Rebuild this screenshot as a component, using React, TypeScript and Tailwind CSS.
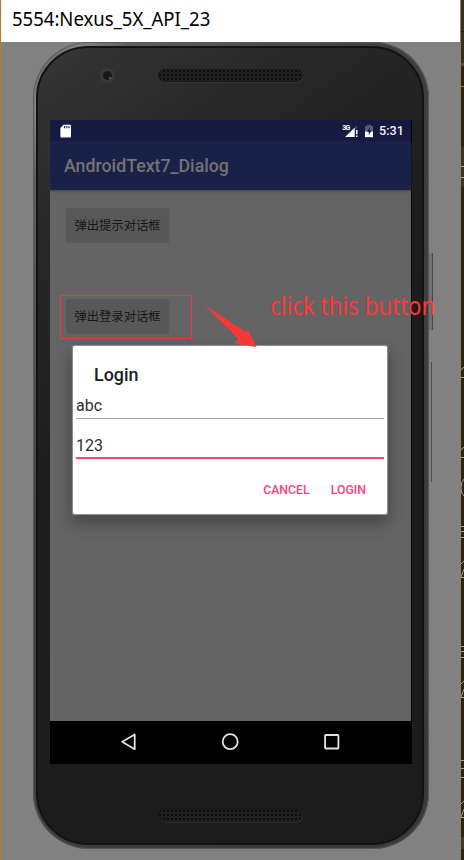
import React from "react";

function Speaker({ id }: { id: string }) {
  return (
    <svg width="146" height="14" viewBox="0 0 146 14" className="block">
      <defs>
        <pattern id={id} width="4" height="4" patternUnits="userSpaceOnUse">
          <rect width="4" height="4" fill="#202020" />
          <rect x="1" y="1" width="2" height="2" fill="#0d0d0d" />
        </pattern>
      </defs>
      <rect x="1" y="1" width="144" height="12.5" rx="6" fill="#3c3c3c" />
      <rect x="0.5" y="0.5" width="144" height="12" rx="6" fill={`url(#${id})`} stroke="#1b1b1b" />
    </svg>
  );
}

function StatusBar() {
  return (
    <div className="flex h-[21px] items-center bg-[#151a41] pl-[10px] text-white">
      <svg width="12" height="14" viewBox="0 0 12 14">
        <path d="M3.5 .8H10.2Q11 .8 11 1.6V12.5Q11 13.4 10.1 13.4H1.3Q.4 13.4 .4 12.5V4Z" fill="#fff" />
        <path d="M4.6 2v2.2M6.8 2v2.2M9 2v2.2" stroke="#151a41" strokeWidth="1.1" />
      </svg>
      <svg width="36" height="16" viewBox="0 0 36 16" className="ml-[269px]">
        <text x="1.3" y="7.2" fontFamily="Roboto" fontSize="7" fontWeight="700" fill="#fff" textLength="8">3G</text>
        <path d="M10 8L16 2V14H10Z" fill="#3e446b" />
        <path d="M4 14L13.7 4.8V14Z" fill="#fff" />
        <path d="M14.2 6H17V14H14.2Z" fill="#151a41" />
        <path d="M15.8 7v4.3M15.8 12.5v1.5" stroke="#fff" strokeWidth="1.5" />
        <path d="M24 3h2V1.8h4V3h2v11h-8Z" fill="#555a78" />
        <path d="M24 8.5h8v5.7h-8Z" fill="#fff" />
        <path d="M28.8 4.3L26 9h1.8v3L30.5 7.8h-1.7Z" fill="#151a41" />
      </svg>
      <span className="ml-[2px] font-[Roboto,sans-serif] text-[12.6px] font-medium leading-5 text-[#f2f2f5]">5:31</span>
    </div>
  );
}

function GreyButton({ label }: { label: string }) {
  return (
    <div className="flex h-[33px] w-[101px] items-center justify-center rounded-[2px] bg-[#585858] font-['Noto_Sans_CJK_SC',sans-serif] text-[12.3px] leading-none text-[#161616] shadow-[0_0_1px_0.5px_#595959]">
      <span className="whitespace-nowrap">{label}</span>
    </div>
  );
}

function NavBar() {
  return (
    <div className="h-[43px] bg-black">
      <svg width="362" height="43" viewBox="0 0 362 43" fill="none" stroke="#e2e2e2" strokeWidth="1.8" strokeLinejoin="round">
        <path d="M72.2 20.8L84.7 13.5V28.2Z" />
        <circle cx="180.2" cy="20.7" r="7.5" />
        <rect x="275.1" y="14" width="13.3" height="13.5" rx=".7" />
      </svg>
    </div>
  );
}

function LoginDialog() {
  return (
    <div className="absolute left-[23px] top-[226px] flex h-[168px] w-[314px] flex-col rounded-[2px] bg-white font-[Roboto,sans-serif] text-[#212121] shadow-[0_0_1px_0.5px_#949494,0_8px_16px_2px_rgba(0,0,0,0.3)]">
      <div className="h-[48px] pl-[21px] pt-[17px] text-[17.9px] font-medium leading-[24px]">Login</div>
      <div className="mx-[3px] h-[25px] border-b-[1.5px] border-[#aaa] pt-[2px] text-[16px] leading-[20px] text-[#303030]">abc</div>
      <div className="mx-[3px] h-[40px] border-b-2 border-[#ff4081] pt-[17px] text-[16px] leading-[20px] text-[#303030]">123</div>
      <div className="flex h-[55px] items-center justify-end gap-[21px] pr-[21px] pt-[7px] text-[12.3px] font-medium text-[#ff4081]">
        <span>CANCEL</span><span>LOGIN</span>
      </div>
    </div>
  );
}

function EditorStrip() {
  return (
    <svg width="4" height="860" viewBox="0 0 4 860" className="block">
      <rect width="4" height="860" fill="#242424" />
      <rect width="4" height="63" fill="#293133" />
      <path d="M0 31.5H4" stroke="#151a1b" />
      <rect y="63" width="4" height="3" fill="#4c4c4c" />
      <path d="M0 86.5H4" stroke="#bb671e" />
      <rect y="147" width="4" height="40" fill="#343434" />
      <path d="M1 166.5H4M1 177.5H4M1 377.5H4M1 457.5H4M1 526.5H4M1 531.5H4M1 537.5H4M1 577.5H4M1 646.5H4M1 651.5H4M1 657.5H4M1 697.5H4M1 760.5H4M1 768.5H4M1 777.5H4M1 817.5H4" stroke="#a5a5a5" />
      <path d="M1 370L4 367M1 450L4 447M4 479Q1 482 1 488T4 496M1 564L4 561M1 577L4 569M1 684L4 681M1 697L4 689M1 804L4 801M1 817L4 809" stroke="#839fc0" fill="none" />
      <rect y="837" width="4" height="12" fill="#393939" />
      <path d="M0 0V860" stroke="#b87820" strokeWidth="2" />
    </svg>
  );
}

export default function App() {
  return (
    <div className="flex h-[860px] w-[464px] overflow-hidden bg-[#818181]">
      <div className="w-px shrink-0 bg-[#b57b32]" />
      <main className="relative w-[459px] shrink-0">
        <header className="h-[42px] bg-white pl-[11px] pt-[6px] font-['Noto_Sans',sans-serif] text-[19px] leading-[26px] text-black">
          <span className="inline-block origin-left scale-x-[0.975] whitespace-nowrap">5554:Nexus_5X_API_23</span>
        </header>
        <div className="ml-[32px] h-[807px] w-[396px] rounded-[56px] bg-[linear-gradient(125deg,#555_0%,#858585_5%,#606060_10%,#403f40_35%,#3a373a_100%)] pb-[4px] pl-[3px] pr-[5px] pt-[4px] shadow-[inset_0_0_1px_1px_#5b5b5b]">
          <div className="h-[799px] rounded-[52px] border-2 border-[#131313] bg-[linear-gradient(145deg,#363636_0%,#29292a_16%,#1d1d1d_40%,#1c1c1d_100%)] pl-[12px]">
            <div className="flex h-[72px] items-start pt-[20px]">
              <div className="ml-[50px] flex size-[15px] items-center justify-center rounded-full bg-[#3a3a3b]">
                <div className="flex size-[9px] items-center justify-center rounded-full bg-[#19181f]"><div className="ml-1 mt-1 size-[2px] rounded-full bg-[#75607c]" /></div>
              </div>
              <div className="ml-[43px] mt-px"><Speaker id="top-holes" /></div>
            </div>
            <div className="relative h-[644px] w-[362px] bg-black">
              <div className="h-[601px] w-[361px] bg-[#646464]">
                <StatusBar />
                <div className="h-[49px] bg-[#1a2148] pl-[14px] pt-[12px] font-[Roboto,sans-serif] text-[17.75px] font-medium leading-[26px] text-[#737373] shadow-[0_1px_2px_#3f3f3f]">AndroidText7_Dialog</div>
                <div className="ml-[17px] mt-[19px]"><GreyButton label="弹出提示对话框" /></div>
                <div className="ml-[10px] mt-[53px] h-[44px] w-[132px] border border-[#fa3535] pl-[6px] pt-[4px]"><GreyButton label="弹出登录对话框" /></div>
              </div>
              <NavBar />
              <LoginDialog />
            </div>
            <div className="ml-[108px] mt-[45px]"><Speaker id="bottom-holes" /></div>
          </div>
        </div>
        <div className="absolute left-[428px] top-[253px] h-[77px] w-[4px] border-r border-[#484848] bg-[#746f72]" />
        <div className="absolute left-[428px] top-[362px] h-[120px] w-[3px] border-r border-[#534f51] bg-[#817d80]" />
        <svg width="56" height="46" viewBox="0 0 56 46" className="absolute left-[202px] top-[303px]">
          <path d="M1 1.5L43 29.5L44.5 26.5L53.5 44L31 40L35.5 36Z" fill="#ff3636" />
        </svg>
        <div className="absolute left-[269px] top-[287px] origin-left scale-x-[0.89] whitespace-nowrap font-['Noto_Sans',sans-serif] text-[25px] leading-[36px] text-[#ff3636]">click this button</div>
      </main>
      <EditorStrip />
    </div>
  );
}
